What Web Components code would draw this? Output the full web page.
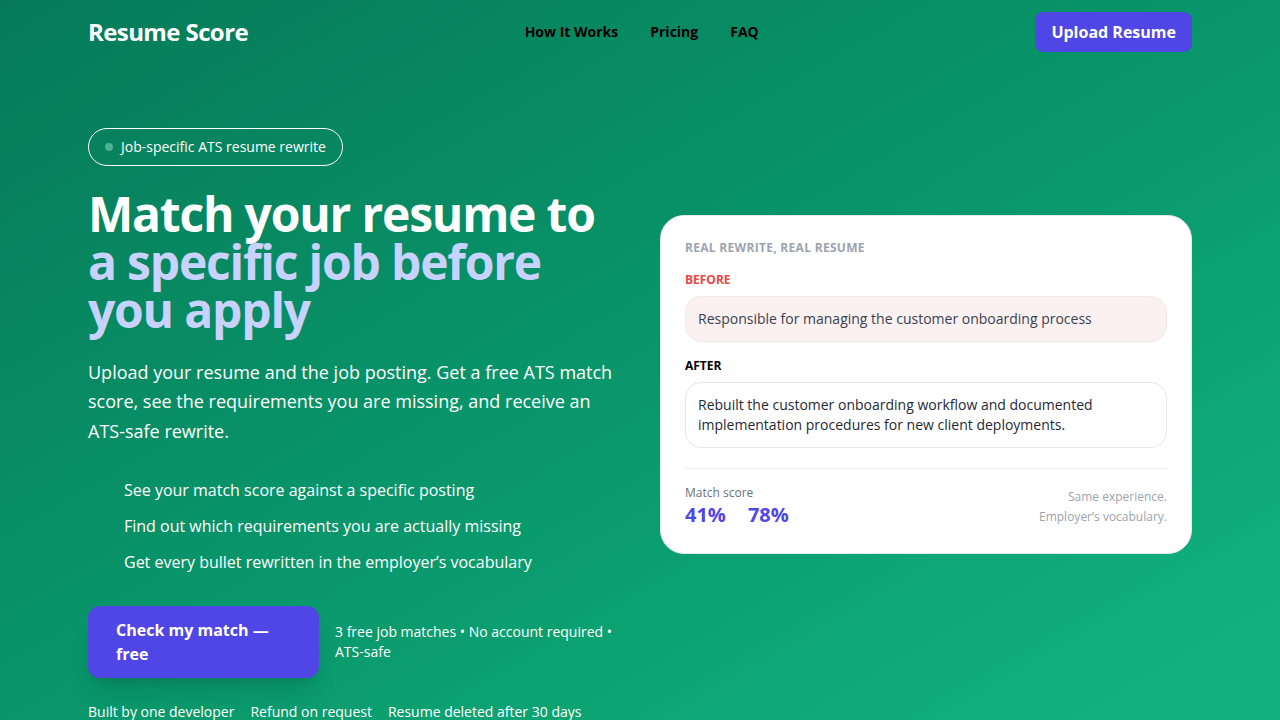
<!DOCTYPE html>
<html lang="en">
<head>
<meta charset="utf-8">
<title>Resume Score</title>
<style>
html,body{margin:0}
body{font-family:"Open Sans",sans-serif;font-size:16px;line-height:24px;color:#fff;background:#059669}
</style>
</head>
<body>
<resume-landing>
  <site-header slot="header"></site-header>
  <hero-copy></hero-copy>
  <rewrite-card></rewrite-card>
</resume-landing>
<script>
const define = (name, html) => customElements.define(name, class extends HTMLElement {
  constructor() {
    super();
    this.attachShadow({ mode: "open" }).innerHTML = html;
  }
});

define("resume-landing", `
<style>
:host{display:block;min-height:100vh;box-sizing:border-box;overflow:hidden;background:linear-gradient(150deg,#067a58 0%,#09966a 50%,#10b17c 92%)}
main{display:grid;grid-template-columns:minmax(0,1fr) minmax(0,1fr);gap:40px;align-items:center;max-width:1104px;margin:0 auto;padding:64px 24px 0}
</style>
<slot name="header"></slot>
<main><slot></slot></main>`);

define("site-header", `
<style>
:host{display:block}
header{display:flex;align-items:center;justify-content:space-between;max-width:1104px;height:64px;margin:0 auto;padding:0 24px}
.logo{font-size:24px;line-height:32px;font-weight:700;letter-spacing:-0.025em;color:#fff;text-decoration:none}
nav{display:flex;gap:32px}
nav a{font-size:14px;line-height:20px;font-weight:700;color:#000;text-decoration:none}
button{font:inherit;font-weight:700;color:#fff;background:#4f46e5;border:0;border-radius:8px;padding:8px 16px}
</style>
<header>
  <a class="logo" href="#">Resume Score</a>
  <nav><a href="#how">How It Works</a><a href="#pricing">Pricing</a><a href="#faq">FAQ</a></nav>
  <button type="button">Upload Resume</button>
</header>`);

define("status-pill", `
<style>
:host{display:inline-flex;align-items:center;gap:8px;padding:8px 16px;border:1px solid #fff;border-radius:999px;font-size:14px;line-height:20px}
i{width:8px;height:8px;border-radius:50%;background:#4fb190}
</style>
<i></i><slot></slot>`);

define("hero-copy", `
<style>
:host{display:block}
h1{margin:24px 0 0;font-size:48px;line-height:48px;font-weight:700;letter-spacing:-0.025em}
h1 span{color:#c7d2fe}
.lead{margin:24px 0 0;font-size:18px;line-height:1.625}
ul{list-style:none;margin:32px 0 0;padding:0 0 0 36px;display:grid;gap:12px}
.cta{display:flex;align-items:center;gap:16px;margin-top:32px}
.cta button{flex:0 0 231px;font:inherit;font-weight:700;text-align:left;color:#fff;background:#4f46e5;border:0;border-radius:12px;padding:12px 28px;box-shadow:0 20px 25px -5px #0000001a,0 8px 10px -6px #0000001a}
.cta p{margin:0;font-size:14px;line-height:20px}
.facts{display:flex;gap:16px;margin-top:24px;font-size:14px;line-height:20px}
</style>
<status-pill>Job-specific ATS resume rewrite</status-pill>
<h1>Match your resume to <span>a specific job before you apply</span></h1>
<p class="lead">Upload your resume and the job posting. Get a free ATS match score, see the requirements you are missing, and receive an ATS-safe rewrite.</p>
<ul>
  <li>See your match score against a specific posting</li>
  <li>Find out which requirements you are actually missing</li>
  <li>Get every bullet rewritten in the employer’s vocabulary</li>
</ul>
<div class="cta">
  <button type="button">Check my match — free</button>
  <p>3 free job matches • No account required • ATS-safe</p>
</div>
<div class="facts"><span>Built by one developer</span><span>Refund on request</span><span>Resume deleted after 30 days</span></div>`);

define("rewrite-sample", `
<style>
:host{display:block;margin-top:16px}
::slotted(h3){margin:0 0 8px;font-size:12px;line-height:16px;font-weight:700}
::slotted(p){margin:0;padding:12px;border:1px solid var(--edge,#e5e7eb);border-radius:16px;background:var(--fill,#fff);color:var(--ink,#1f2937);font-size:14px;line-height:20px}
</style>
<slot></slot>`);

define("rewrite-card", `
<style>
:host{display:block;box-sizing:border-box;margin-bottom:80px;padding:24px;border:1px solid #e5e7eb;border-radius:24px;background:#fff;color:#000}
h2{margin:0;font-size:12px;line-height:16px;font-weight:700;letter-spacing:0.025em;color:#9ca3af}
.before{--fill:#fcf1f1;--ink:#374151;--edge:#efe9ea}
.before h3{color:#ef4444}
footer{display:flex;justify-content:space-between;align-items:center;margin-top:20px;padding-top:16px;border-top:1px solid #fbeeee;font-size:12px;line-height:16px;color:#6b7280}
.score{display:flex;gap:22px;font-size:20px;line-height:28px;font-weight:700;color:#4f46e5}
.note{text-align:right;line-height:20px;color:#9ca3af}
</style>
<h2>REAL REWRITE, REAL RESUME</h2>
<rewrite-sample class="before"><h3>BEFORE</h3><p>Responsible for managing the customer onboarding process</p></rewrite-sample>
<rewrite-sample><h3>AFTER</h3><p>Rebuilt the customer onboarding workflow and documented implementation procedures for new client deployments.</p></rewrite-sample>
<footer>
  <div>Match score<div class="score"><span>41%</span><span>78%</span></div></div>
  <div class="note">Same experience.<br>Employer’s vocabulary.</div>
</footer>`);
</script>
</body>
</html>
